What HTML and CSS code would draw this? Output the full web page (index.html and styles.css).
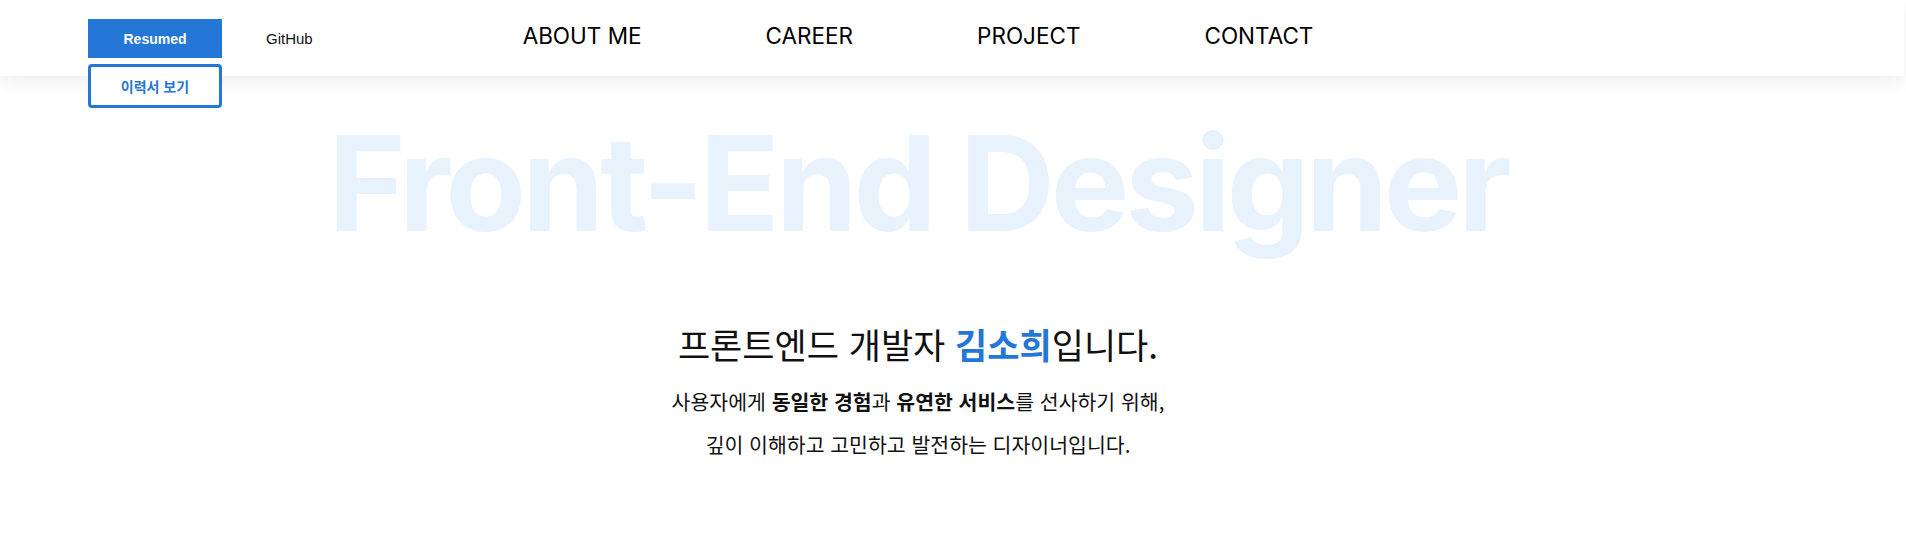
FILE: index.html
```html
<!DOCTYPE html>
<html lang="ko">
<head>
<meta charset="utf-8">
<title>Front-End Designer</title>
<link rel="stylesheet" href="styles.css">
</head>
<body>
<header class="site-header">
  <div class="header-inner">
    <div class="quick-links">
      <div class="resume-group">
        <a class="btn btn-solid" href="#">Resumed</a>
        <a class="btn btn-outline" href="#">이력서 보기</a>
      </div>
      <a class="github-link" href="#">GitHub</a>
    </div>
    <nav class="main-nav">
      <a href="#">ABOUT ME</a>
      <a href="#">CAREER</a>
      <a href="#">PROJECT</a>
      <a href="#">CONTACT</a>
    </nav>
    <div class="header-spacer"></div>
  </div>
</header>
<main class="hero">
  <h1 class="hero-title">Front-End Designer</h1>
  <section class="intro">
    <h2 class="intro-title">프론트엔드 개발자 <strong>김소희</strong>입니다.</h2>
    <p class="intro-text">사용자에게 <b>동일한 경험</b>과 <b>유연한 서비스</b>를 선사하기 위해,</p>
    <p class="intro-text">깊이 이해하고 고민하고 발전하는 디자이너입니다.</p>
  </section>
</main>
</body>
</html>
```

FILE: styles.css
```css
* { box-sizing: border-box; }

html, body {
  margin: 0;
  padding: 0;
  background: #ffffff;
}

body {
  font-family: "Noto Sans CJK KR", "Noto Sans", sans-serif;
  color: #111111;
  overflow: hidden;
}

a { text-decoration: none; color: inherit; }

.site-header {
  position: relative;
  z-index: 2;
  height: 76px;
  width: 1904px;
  background: #ffffff;
  box-shadow: 0 6px 18px rgba(0, 0, 0, 0.07);
}

.header-inner {
  width: 1836px;
  height: 76px;
  display: grid;
  grid-template-columns: 1fr auto 1fr;
  align-items: start;
}

.quick-links {
  display: flex;
  align-items: flex-start;
  padding-left: 88px;
  padding-top: 19px;
  gap: 44px;
}

.resume-group {
  display: flex;
  flex-direction: column;
  gap: 6px;
  width: 134px;
}

.btn {
  display: flex;
  align-items: center;
  justify-content: center;
  font-family: "Liberation Sans", Arial, "Noto Sans CJK KR", sans-serif;
  font-size: 14px;
  font-weight: 700;
}

.btn-solid {
  height: 39px;
  background: #2477d6;
  color: #ffffff;
}

.btn-outline {
  height: 44px;
  background: #ffffff;
  color: #2477d6;
  border: 3px solid #2477d6;
  border-radius: 4px;
}

.github-link {
  height: 39px;
  display: flex;
  align-items: center;
  font-family: "Liberation Sans", Arial, sans-serif;
  font-size: 15px;
  color: #111111;
}

.main-nav {
  display: flex;
  gap: 124px;
  height: 76px;
  align-items: center;
  padding-bottom: 5px;
}

.main-nav a {
  font-family: Inter, "Liberation Sans", sans-serif;
  font-size: 22.5px;
  color: #000000;
}

.hero {
  width: 1836px;
  display: flex;
  flex-direction: column;
  align-items: center;
}

.hero-title {
  margin: 0;
  padding-top: 27px;
  font-family: Inter, "Liberation Sans", sans-serif;
  font-weight: 700;
  font-size: 132px;
  line-height: 160px;
  letter-spacing: -4.2px;
  color: #e8f2fd;
  white-space: nowrap;
}

.intro {
  margin-top: 57px;
  display: flex;
  flex-direction: column;
  align-items: center;
}

.intro-title {
  margin: 0 0 12px;
  font-size: 35px;
  font-weight: 400;
  line-height: 48px;
  color: #111111;
}

.intro-title strong {
  color: #2477d6;
  font-weight: 700;
}

.intro-text {
  margin: 0;
  font-size: 20.5px;
  line-height: 43px;
  color: #111111;
}

.intro-text b { font-weight: 700; }
```
